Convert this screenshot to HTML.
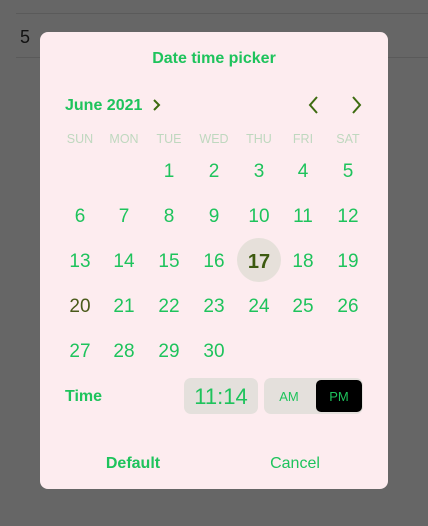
<!DOCTYPE html><html><head><style>
body{margin:0;width:428px;height:526px;background:#666;position:relative;overflow:hidden;font-family:"Liberation Sans",sans-serif}
.a{position:absolute}
.d{position:absolute;left:40px;top:32px;width:348px;height:457px;background:#fdecef;border-radius:8px}
.g{color:#1ec35c}
.n{position:absolute;width:44px;text-align:center;font-size:19px;color:#1ec35c;transform:translate(-22px,-9px)}
.w{position:absolute;width:44px;text-align:center;font-size:12.5px;color:#bfd8bf;transform:translateX(-22px)}
</style></head><body>
<div class="a" style="left:16px;top:13px;width:412px;height:1px;background:#5a5a5a"></div>
<div class="a" style="left:16px;top:57px;width:412px;height:1px;background:#5a5a5a"></div>
<div class="a" style="left:20px;top:27px;font-size:18px;color:#111">5</div>
<div class="d"></div>
<div class="a g" style="left:40px;width:348px;top:50px;text-align:center;font-weight:bold;font-size:16px">Date time picker</div>
<div class="a g" style="left:65px;top:97px;font-weight:bold;font-size:16px">June 2021</div>
<svg class="a" style="left:150px;top:97px" width="12" height="16"><path d="M4 3l5 5-5 5" stroke="#3d6b10" stroke-width="2" fill="none"/></svg>
<svg class="a" style="left:305px;top:95px" width="16" height="20"><path d="M12 2l-7 8 7 8" stroke="#3d6b10" stroke-width="2" fill="none"/></svg>
<svg class="a" style="left:349px;top:95px" width="16" height="20"><path d="M4 2l7 8-7 8" stroke="#3d6b10" stroke-width="2" fill="none"/></svg>
<div class="w" style="left:80px;top:132px">SUN</div><div class="w" style="left:124px;top:132px">MON</div><div class="w" style="left:169px;top:132px">TUE</div><div class="w" style="left:214px;top:132px">WED</div><div class="w" style="left:259px;top:132px">THU</div><div class="w" style="left:303px;top:132px">FRI</div><div class="w" style="left:348px;top:132px">SAT</div>
<div class="a" style="left:237px;top:238px;width:44px;height:44px;border-radius:50%;background:#e6e0da"></div>
<div class="n" style="left:169px;top:170px">1</div><div class="n" style="left:214px;top:170px">2</div><div class="n" style="left:259px;top:170px">3</div><div class="n" style="left:303px;top:170px">4</div><div class="n" style="left:348px;top:170px">5</div>
<div class="n" style="left:80px;top:215px">6</div><div class="n" style="left:124px;top:215px">7</div><div class="n" style="left:169px;top:215px">8</div><div class="n" style="left:214px;top:215px">9</div><div class="n" style="left:259px;top:215px">10</div><div class="n" style="left:303px;top:215px">11</div><div class="n" style="left:348px;top:215px">12</div>
<div class="n" style="left:80px;top:260px">13</div><div class="n" style="left:124px;top:260px">14</div><div class="n" style="left:169px;top:260px">15</div><div class="n" style="left:214px;top:260px">16</div><div class="n" style="left:259px;top:260px;color:#3d5a10;font-weight:bold;font-size:20px">17</div><div class="n" style="left:303px;top:260px">18</div><div class="n" style="left:348px;top:260px">19</div>
<div class="n" style="left:80px;top:305px;color:#4a5a1a">20</div><div class="n" style="left:124px;top:305px">21</div><div class="n" style="left:169px;top:305px">22</div><div class="n" style="left:214px;top:305px">23</div><div class="n" style="left:259px;top:305px">24</div><div class="n" style="left:303px;top:305px">25</div><div class="n" style="left:348px;top:305px">26</div>
<div class="n" style="left:80px;top:350px">27</div><div class="n" style="left:124px;top:350px">28</div><div class="n" style="left:169px;top:350px">29</div><div class="n" style="left:214px;top:350px">30</div>
<div class="a g" style="left:65px;top:388px;font-weight:bold;font-size:16px">Time</div>
<div class="a" style="left:184px;top:378px;width:74px;height:36px;border-radius:7px;background:#e4e0dc;color:#1ec35c;font-size:22px;text-align:center;line-height:38px">11:14</div>
<div class="a" style="left:264px;top:378px;width:99px;height:36px;border-radius:7px;background:#e4e0dc"></div>
<div class="a g" style="left:270px;top:379px;width:38px;line-height:36px;text-align:center;font-size:13px">AM</div>
<div class="a" style="left:316px;top:380px;width:46px;height:32px;border-radius:5px;background:#000;color:#1ec35c;font-size:13px;text-align:center;line-height:34px">PM</div>
<div class="a g" style="left:83px;width:100px;top:455px;text-align:center;font-weight:bold;font-size:16px">Default</div>
<div class="a g" style="left:245px;width:100px;top:455px;text-align:center;font-size:16px">Cancel</div>
</body></html>
